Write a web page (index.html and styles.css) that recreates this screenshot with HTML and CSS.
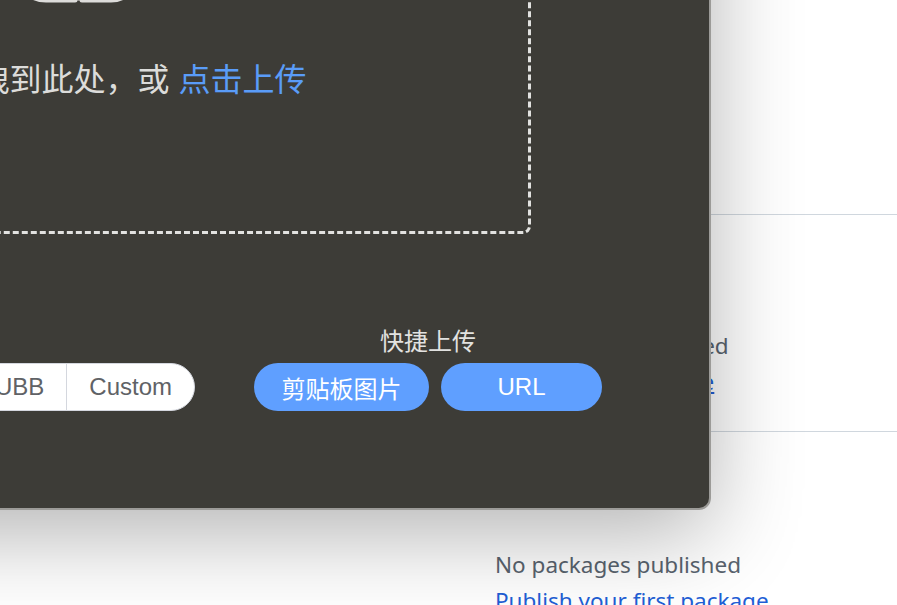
FILE: index.html
```html
<!DOCTYPE html>
<html lang="zh-CN">
<head>
<meta charset="utf-8">
<title>Upload</title>
<link rel="stylesheet" href="styles.css">
</head>
<body>
<div class="page">
  <div class="main"></div>
  <aside class="sidebar">
    <section class="about"></section>
    <section class="side-section">
      <h2 class="side-title">Releases</h2>
      <div class="muted">No releases published</div>
      <a class="side-link" href="#">Create a new release</a>
    </section>
    <section class="side-section side-packages">
      <h2 class="side-title">Packages</h2>
      <div class="muted">No packages published</div>
      <a class="side-link" href="#">Publish your first package</a>
    </section>
  </aside>
</div>

<div class="modal">
  <div class="dropzone">
    <svg class="upload-icon" width="124" height="82" viewBox="0 0 124 82" fill="none" stroke="#dddcda" stroke-width="5" stroke-linecap="round" stroke-linejoin="round">
      <path d="M59 78 H30 C14 78 4 67 4 55 C4 43 13 34 25 34 C28 18 42 6 60 6 C76 6 89 16 94 30 C108 31 119 42 119 56 C119 68 109 78 95 78 H66"/>
      <path d="M62.5 76 V42 M50 53 L62.5 40 L75 53"/>
    </svg>
    <div class="drop-text">将文件拖拽到此处，或 <em class="drop-link">点击上传</em></div>
  </div>
  <div class="tools">
    <div class="tool-group">
      <div class="tool-title">链接格式</div>
      <div class="btn-group">
        <button class="seg seg-active">Markdown</button>
        <button class="seg">HTML</button>
        <button class="seg">URL</button>
        <button class="seg">UBB</button>
        <button class="seg">Custom</button>
      </div>
    </div>
    <div class="tool-group">
      <div class="tool-title">快捷上传</div>
      <div class="quick">
        <button class="pill pill-clip">剪贴板图片</button>
        <button class="pill pill-url">URL</button>
      </div>
    </div>
  </div>
</div>
</body>
</html>
```

FILE: styles.css
```css
html, body {
  margin: 0;
  padding: 0;
  width: 897px;
  height: 605px;
  overflow: hidden;
  background: #ffffff;
}

.page {
  display: flex;
  gap: 23px;
  font-family: "Noto Sans", "Liberation Sans", sans-serif;
}

.main {
  width: 472px;
  flex: none;
}

.sidebar {
  flex: 1;
  min-width: 0;
}

.about {
  height: 214px;
}

.side-section {
  border-top: 1px solid #d0d7de;
  padding: 31px 0 31px;
}

.side-packages {
  padding-top: 33px;
}

.side-title {
  margin: 0 0 46px;
  font-size: 24px;
  line-height: 36px;
  font-weight: 600;
  color: #1f2328;
}

.muted {
  font-size: 22.5px;
  line-height: 36px;
  color: #59636e;
  white-space: nowrap;
}

.side-link {
  display: block;
  font-size: 22.5px;
  line-height: 36px;
  color: #1f5fd6;
  text-decoration: underline;
  white-space: nowrap;
}

/* modal */
.modal {
  position: absolute;
  right: 186px;
  bottom: 95px;
  width: 1256px;
  box-sizing: border-box;
  border: 2px solid #9c9b98;
  border-radius: 12px;
  background: #3d3c37;
  box-shadow: 0 24px 90px rgba(0, 0, 0, 0.3);
  display: flex;
  flex-direction: column;
  align-items: flex-end;
  padding-bottom: 97px;
  font-family: "Liberation Sans", "Noto Sans CJK SC", sans-serif;
}

.dropzone {
  width: 906px;
  height: 420px;
  box-sizing: border-box;
  margin-right: 178px;
  border: 3px dashed #e2e2e0;
  border-radius: 8px;
  display: flex;
  flex-direction: column;
  align-items: center;
  justify-content: flex-end;
  padding-bottom: 132px;
}

.upload-icon {
  display: block;
  margin: 0 0 57px 0;
}

.drop-text {
  font-size: 32px;
  line-height: 38px;
  color: #dcdcda;
  white-space: nowrap;
}

.drop-link {
  font-style: normal;
  color: #5a9cf8;
}

.tools {
  display: flex;
  align-items: flex-end;
  gap: 59px;
  margin: 93px 107px 0 0;
}

.tool-group {
  display: flex;
  flex-direction: column;
  align-items: center;
}

.tool-title {
  font-size: 24px;
  line-height: 29px;
  color: #e2e2e0;
  margin-bottom: 7px;
}

.btn-group {
  display: flex;
}

.seg {
  height: 48px;
  padding: 0 22px;
  margin: 0 0 0 -1px;
  border: 1px solid #d4d7de;
  background: #ffffff;
  color: #606266;
  font-family: inherit;
  font-size: 24px;
}

.seg:first-child {
  margin-left: 0;
  border-radius: 24px 0 0 24px;
}

.seg:last-child {
  border-radius: 0 24px 24px 0;
}

.seg-active {
  background: #5f9fff;
  border-color: #5f9fff;
  color: #ffffff;
}

.quick {
  display: flex;
  gap: 12px;
}

.pill {
  height: 48px;
  border: none;
  border-radius: 24px;
  background: #5f9fff;
  color: #ffffff;
  font-family: inherit;
  font-size: 24px;
  padding: 0;
}

.pill-clip {
  width: 175px;
}

.pill-url {
  width: 161px;
}
```
